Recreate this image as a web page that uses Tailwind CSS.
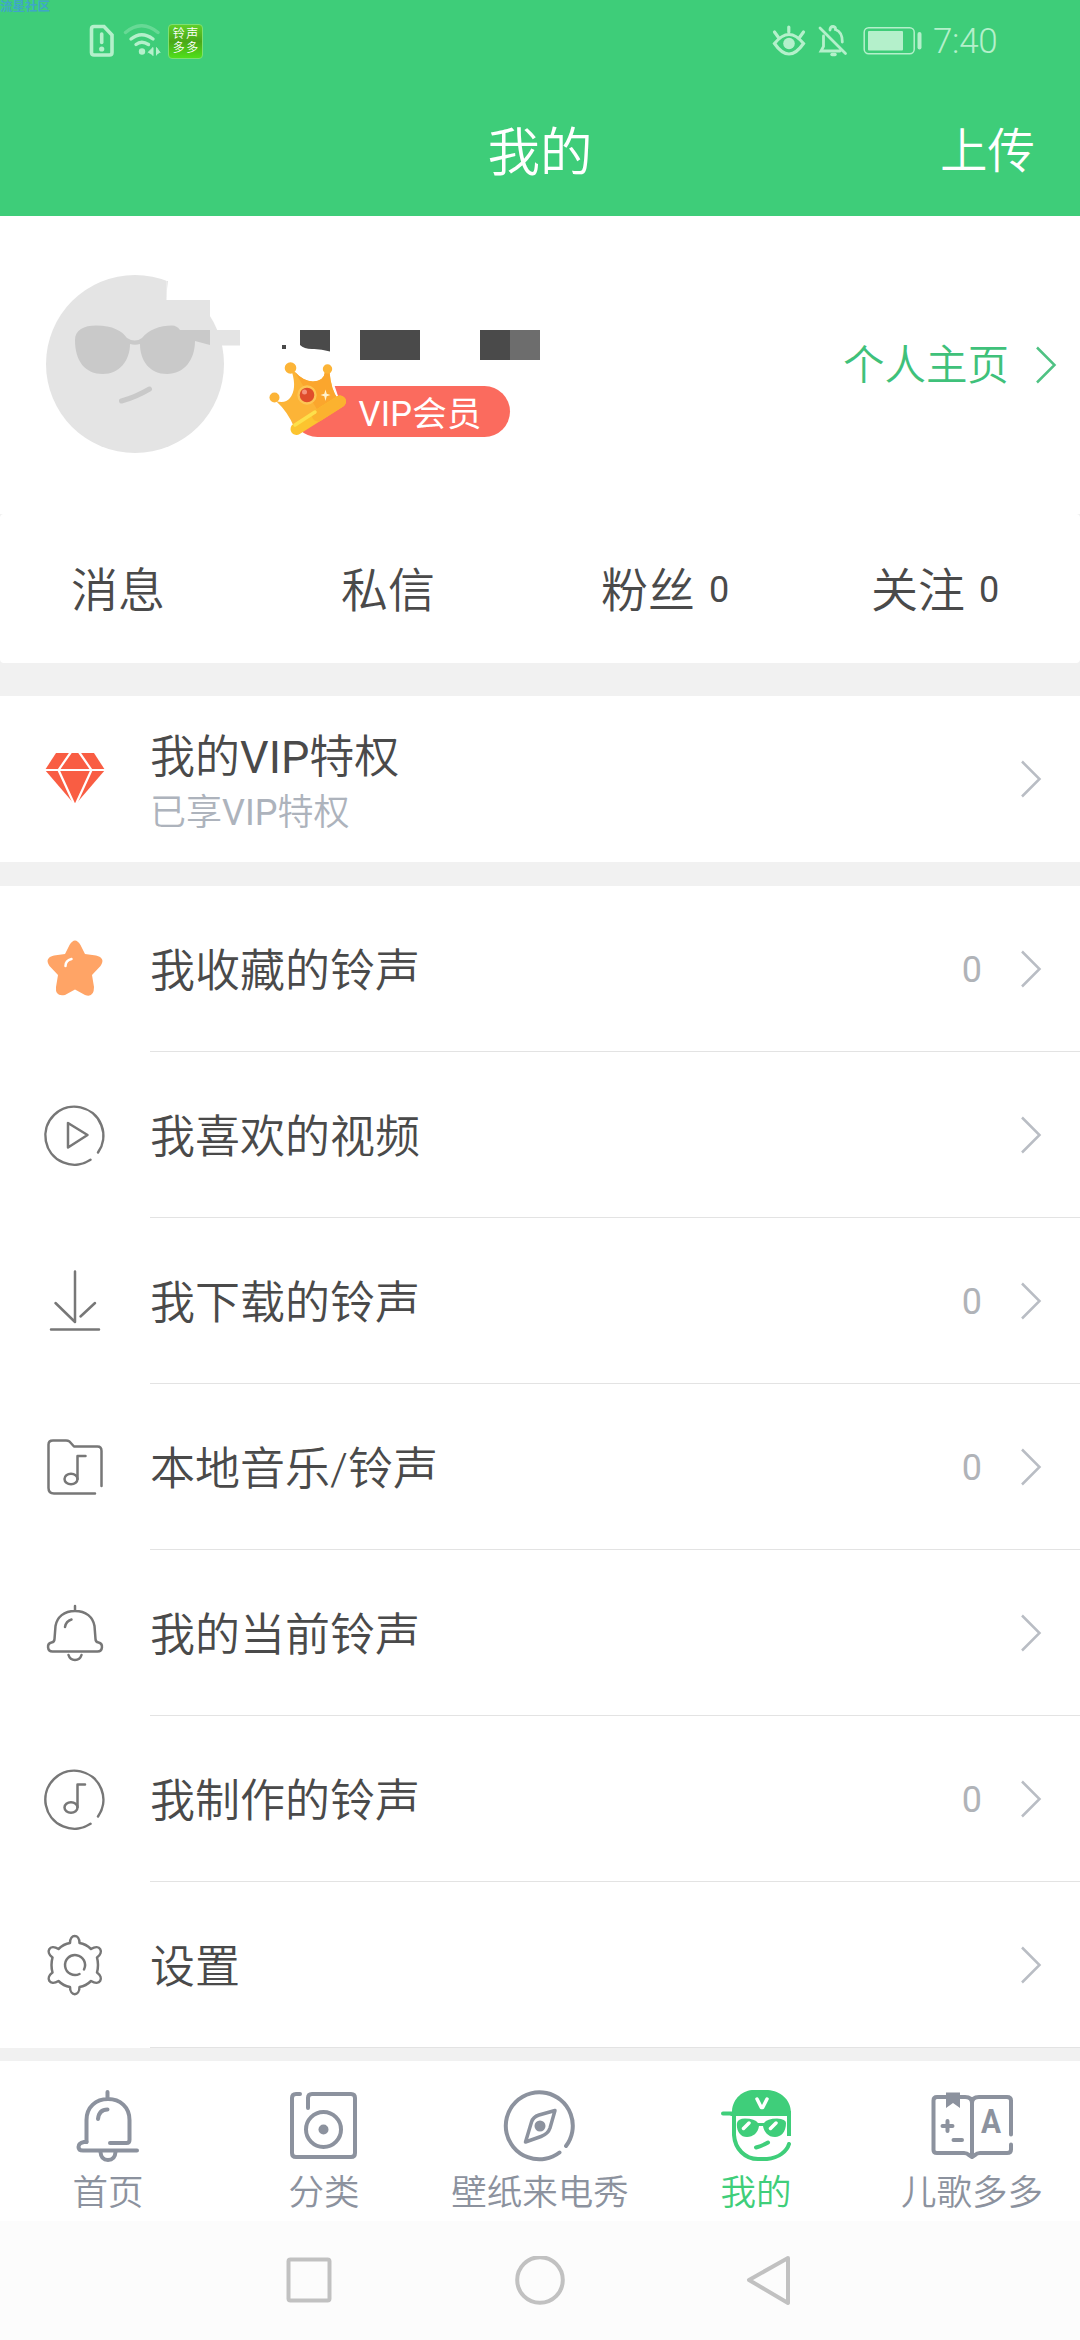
<!DOCTYPE html>
<html lang="zh-CN">
<head>
<meta charset="utf-8">
<title>我的</title>
<script src="https://cdn.jsdelivr.net/npm/@tailwindcss/browser@4"></script>
</head>
<body class="bg-[#f1f1f1] font-['Roboto','Noto_Sans_CJK_SC',sans-serif] font-[350] text-[#4a4a4a]">
<div class="relative flex h-[2340px] w-[1080px] flex-col overflow-hidden">

  <!-- Header -->
  <header class="h-[216px] bg-[#3ecd79]">
    <span class="absolute left-0 top-0 h-[18px] whitespace-nowrap text-[12.5px] leading-[14px] font-bold text-[#3fa6c8]">流星社区</span>
    <div class="flex h-[82px] items-center justify-between pl-[88px] pr-[82px] text-[#b4f0cb]">
      <div class="flex items-center">
        <svg class="h-[34px] w-[28px]" viewBox="0 0 28 34" fill="none" stroke="currentColor" stroke-width="3.6"><path d="M6 2.5H16L24 11V28.500Q24 31 21.500 31H6Q3.500 31 3.500 28.500V5Q3.500 2.500 6 2.500Z"/><path d="M13.700 10V18.500" stroke-linecap="round"/><circle cx="13.700" cy="25" r="2.600" fill="currentColor" stroke="none"/></svg>
        <svg class="ml-[7px] h-[34px] w-[38px]" viewBox="0 0 38 34" fill="none" stroke="currentColor" stroke-width="3.400" stroke-linecap="round"><path d="M2.500 8.500Q18.500 -5 35 8.500" opacity=".35"/><path d="M8 15Q18.500 6.500 30 15"/><path d="M13 20.500Q18.500 16 25.500 20.500" /><circle cx="19" cy="27.500" r="3.200" fill="currentColor" stroke="none"/><path d="M25 28.500L30 23.500V31.500M33.500 31V23.500L37 28.500" fill="currentColor" stroke-width="1"/></svg>
        <div class="ml-[7px] grid h-[35px] w-[35px] grid-cols-2 place-items-center rounded-[4px] border border-[#7fe070] bg-linear-to-b from-[#5fd02a] via-[#4aa818] to-[#4fe01a] px-[3px] py-[3px] text-[12px] leading-[12px] text-white"><span>铃</span><span>声</span><span>多</span><span>多</span></div>
      </div>
      <div class="flex items-center">
        <svg class="h-[34px] w-[34px]" viewBox="0 0 34 34" fill="none" stroke="currentColor" stroke-width="3.200" stroke-linecap="round"><path d="M2.500 19.500Q17 1.500 31.500 19.500Q17 40.500 2.500 19.500Z"/><path d="M16.800 3V8M2.500 8L6.500 13.500M31.500 8L27.500 13.500"/><circle cx="17" cy="19.500" r="5.800" fill="currentColor" stroke="none"/></svg>
        <svg class="ml-[12px] h-[34px] w-[30px]" viewBox="0 0 30 34" fill="none" stroke="currentColor" stroke-width="2.800" stroke-linecap="round"><path d="M2 4L27.500 29.500M5.500 12V22.500L3 27H22"/><path d="M12 6Q12 2.500 15 2.500Q18 3 17.500 5.500Q24.500 8 24.300 18"/><path d="M14 30.500H17" stroke-width="3.500"/></svg>
        <svg class="ml-[14px] h-[34px] w-[62px]" viewBox="0 0 62 34" fill="none"><rect x="2.200" y="3.700" width="50" height="26" rx="4.500" stroke="currentColor" stroke-width="1.500"/><rect x="6" y="7" width="35" height="19.500" rx="1" fill="currentColor"/><rect x="55.500" y="8" width="4" height="17.500" rx="2" fill="currentColor"/></svg>
        <span class="ml-[9px] block w-[65px] whitespace-nowrap text-[35px] leading-none tracking-[-0.3px]">7:40</span>
      </div>
    </div>
    <div class="grid h-[134px] grid-cols-3 items-start text-white">
      <h1 class="col-start-2 mt-[43px] text-center text-[52.500px] leading-[56px] font-[350]">我的</h1>
      <a class="mt-[43px] pr-[45px] text-right text-[47.500px] leading-[54px]">上传</a>
    </div>
  </header>

  <!-- Profile -->
  <section class="relative flex h-[298px] bg-white">
    <svg class="h-[298px] w-[560px] shrink-0" viewBox="0 216 560 298">
      <circle cx="135" cy="364" r="89" fill="#e4e4e4"/>
      <path d="M166.500 260H240V345L224 346Q217 318 210 300H166.500Z" fill="#fff"/>
      <path d="M168 281Q166.500 290 166.500 300H210V345H222V352H166.500V281Z" fill="#e4e4e4"/>
      <rect x="210" y="330" width="30" height="15.500" fill="#e4e4e4"/>
      <path d="M75 340C75 330 84 325.500 96 325.500C113 325.500 122 331 127 338Q135 343 142 338C148 330 160 325.500 172 325.500Q177 325.500 180 330H210V345L195 341C195 360 184 374 167 374C150 374 140 361 140 344Q135 345.500 130 344C130 361 119 374 103 374C85 374 75 361 75 340Z" fill="#c9c9c9"/>
      <path d="M121.500 401Q136 397 149.500 389" fill="none" stroke="#c9c9c9" stroke-width="5" stroke-linecap="round"/>
      <g fill="#4a4a4a"><rect x="282" y="345" width="4" height="4"/><path d="M300 330H330V351.500Q320 348.500 312 349Q304 349 300 345Z"/><rect x="360" y="330" width="60" height="30"/><rect x="480" y="330" width="30" height="30"/></g>
      <rect x="510" y="330" width="30" height="30" fill="#6d6d6d"/>
      <rect x="292" y="386" width="218" height="51" rx="25.500" fill="#fb6b5e"/>
      <path d="M286 384H334L338 396L296 422L286 412Z" fill="#fff"/>
      <path d="M276 401Q285 404 290 398Q297 389 292 372L295 372Q303 381 313 381.500Q324 381 325 372L329.500 372Q331 390 338 399L294 427Q288 412 276 401Z" fill="#fcb437"/>
      <path d="M295 372Q303 381 313 381.500Q324 381 325 372L329.500 372Q331 390 338 399L318 411Z" fill="#fba62d"/>
      <g fill="#fcb437"><circle cx="290.500" cy="368" r="5.800"/><circle cx="327.500" cy="369" r="4.700"/><circle cx="274.500" cy="397.500" r="5"/></g>
      <path d="M296.500 429L340 401.500" stroke="#fcc42f" stroke-width="12" stroke-linecap="round"/>
      <path d="M318 415.500L340 401.500" stroke="#fbb22f" stroke-width="12" stroke-linecap="round"/>
      <path d="M295 425L315 412" stroke="#fde04b" stroke-width="3.500" stroke-linecap="round"/>
      <circle cx="307" cy="395" r="8.500" fill="#e04d2b" stroke="#fdc554" stroke-width="2.400"/><circle cx="304.500" cy="392" r="2.500" fill="#f5927b"/>
      <path d="M325.500 389.500L326.700 393.800L330.500 395L326.700 396.200L325.500 401L324.300 396.200L320.500 395L324.300 393.800Z" fill="#fff3cf"/>
      <text x="358.500" y="425.500" font-size="34.500" fill="#fff" font-weight="400" textLength="123">VIP会员</text>
    </svg>
    <a class="ml-auto flex h-[298px] items-center pr-[23px] text-[41.500px] leading-none text-[#3fc17a]"><span class="pt-[2px]">个人主页</span>
      <svg class="ml-[26px] h-[40px] w-[22px]" viewBox="0 0 22 40" fill="none" stroke="#4fc283" stroke-width="2.500"><path d="M2 2.500L19.500 20L2 37.500"/></svg></a>
  </section>

  <!-- Counters -->
  <section class="grid h-[149px] grid-cols-4 items-center rounded-[4px] bg-white pt-[3px] text-[47px] leading-none">
    <a class="pl-[71px]">消息</a><a class="pl-[71px]">私信</a>
    <a class="flex items-center gap-[14px] pl-[61px]">粉丝<span class="text-[36px] font-normal">0</span></a>
    <a class="flex items-center gap-[14px] pl-[61px]">关注<span class="text-[36px] font-normal">0</span></a>
  </section>

  <!-- VIP -->
  <section class="mt-[33px] flex h-[166px] items-center bg-white pr-[38px]">
    <svg class="mx-[40px] h-[70px] w-[70px]" viewBox="0 0 70 70"><path d="M16 9H54L65 26L35 61L5 26Z" fill="#f95d43"/><path d="M4 26H66M31 8L18.500 26L35 62L51.500 26L39 8" stroke="#fff" stroke-width="2.200" fill="none"/></svg>
    <div class="flex-1 pt-[12px]"><p class="text-[45px] leading-[56px]">我的<span class="font-normal">VIP</span>特权</p><p class="text-[36px] leading-[54px] text-[#adb3bc]">已享<span class="font-normal">VIP</span>特权</p></div>
    <svg class="h-[40px] w-[22px]" viewBox="0 0 22 40" fill="none" stroke="#b9bdc4" stroke-width="2.500"><path d="M2 2.500L19.500 20L2 37.500"/></svg>
  </section>

  <!-- Menu -->
  <ul id="menu" class="mt-[24px] bg-white"></ul>

  <!-- Tabs -->
  <nav class="mt-[13px] grid h-[160px] grid-cols-5 bg-white pt-[25px] text-center text-[35.500px] leading-[54px] text-[#8c929e]">
    <a><svg class="mx-auto h-[80px] w-[80px]" viewBox="0 0 80 80" fill="none" stroke="currentColor" stroke-width="4" stroke-linecap="round" stroke-linejoin="round"><path d="M39.500 6V13M18.500 56V34C18.500 21 28 13 40 13C52 13 61.500 21 61.500 34V54Q61.500 57 58.500 57H42"/><path d="M30 33Q31 23.500 39.500 23.500M18.500 56H16Q10.500 57 10.500 61Q10.500 64.500 15 64.500H69"/><path d="M32.500 66Q33 74 40 74Q47 74 47.500 66"/></svg>首页</a>
    <a><svg class="mx-auto h-[80px] w-[80px]" viewBox="0 0 80 80" fill="none" stroke="currentColor" stroke-width="4" stroke-linecap="round" stroke-linejoin="round"><path d="M16 8H12Q8 8 8 12V67Q8 71 12 71H67Q71 71 71 67V12Q71 8 67 8H28Q24 8 24 12V22"/><circle cx="39.500" cy="43.500" r="17.500"/><circle cx="39.500" cy="43.500" r="5" fill="currentColor" stroke="none"/></svg>分类</a>
    <a><svg class="mx-auto h-[80px] w-[80px]" viewBox="0 0 80 80" fill="none" stroke="currentColor" stroke-width="4" stroke-linecap="round" stroke-linejoin="round"><path d="M59.500 66.500A33.500 33.500 0 1 1 66 60"/><path d="M55 24.500L39 29Q33 31 31.500 36L25.500 56L41 50.500Q48 48 50 42Z" stroke-width="3.500"/><circle cx="40" cy="40" r="5.500" fill="currentColor" stroke="none"/></svg>壁纸来电秀</a>
    <a class="text-[#3fce7a]"><svg class="mx-auto h-[80px] w-[80px]" viewBox="0 0 80 80" fill="none" stroke="currentColor" stroke-width="4" stroke-linecap="round" stroke-linejoin="round"><path d="M16 28V25C17 12 27 4 38 4H52C64 5 75 13 75 27V30H14Z" fill="currentColor" stroke="none"/><path d="M7 27.500H16M18 28V49C19 63 29 73 42 73H51C63 72 71 65 73 58"/><path d="M73 25V50" stroke-linecap="butt"/><path d="M40 61.500Q47 59.500 52 56.500"/><path d="M21 37Q22 32.500 29 32.500Q39 32.500 42 37H48Q51 32.500 61 32.500Q70 33 70 37C70 46 65 51 59 51C52 51 48 46 47 40H43C42 47 37 51 31 51C24 51 20 44 21 37Z" fill="currentColor" stroke="none"/><path d="M27.500 42.500L33 37M54.500 42.500L60 37" stroke="#fff" stroke-width="3.500"/><path d="M41 13L45.300 21.500H46.700L51 13" stroke="#fff" stroke-width="3.500"/></svg>我的</a>
    <a><svg class="mx-auto h-[80px] w-[84px]" viewBox="0 0 84 80" fill="none" stroke="currentColor" stroke-width="4" stroke-linecap="round" stroke-linejoin="round"><path d="M18 11H7Q3.500 11 3.500 14.500V64Q3.500 67 7 67H34Q37 67 39 69L42 71L45 69Q47 67 50 67H77Q81 67 81 63.500V58.500M81 48.500V14.500Q81 11 77 11H49Q42 11 42 17Q42 11 35 11H30M42 16V70M12.500 40H22.500M17.500 35V45M23.500 54H32"/><path d="M16 6.500H30V22L23 17L16 22Z" fill="currentColor" stroke="none"/><text x="51" y="46.500" font-size="33" font-weight="700" fill="currentColor" stroke="none" textLength="20" lengthAdjust="spacingAndGlyphs">A</text></svg>儿歌多多</a>
  </nav>

  <!-- System navigation -->
  <footer class="flex h-[119px] items-center bg-[#fcfcfc] pl-[283px] pt-[2px] text-[#c1c1c1]">
    <svg class="h-[52px] w-[52px]" viewBox="0 0 52 52" fill="none" stroke="currentColor" stroke-width="4"><rect x="5.500" y="3.500" width="41" height="41" rx="2"/></svg>
    <svg class="ml-[179px] h-[52px] w-[52px]" viewBox="0 0 52 52" fill="none" stroke="currentColor" stroke-width="4"><circle cx="26" cy="24" r="22.800"/></svg>
    <svg class="ml-[179px] h-[52px] w-[52px]" viewBox="0 0 52 52" fill="none" stroke="currentColor" stroke-width="4" stroke-linejoin="round"><path d="M43 2L4 24L43 47Z"/></svg>
  </footer>
</div>

<template id="row">
  <li class="flex h-[166px]">
    <span class="flex w-[150px] items-center justify-center" data-icon></span>
    <div class="flex flex-1 items-center border-b border-[#e3e3e3] pr-[38px]">
      <span class="flex-1 pt-[5px] text-[45px] leading-none" data-label></span>
      <span class="mr-[38px] pt-[3px] text-[36px] leading-none font-normal text-[#b0b3b8]" data-count></span>
      <svg class="h-[40px] w-[22px]" viewBox="0 0 22 40" fill="none" stroke="#b9bdc4" stroke-width="2.500"><path d="M2 2.500L19.500 20L2 37.500"/></svg>
    </div>
  </li>
</template>
<script>
const line = p => '<svg class="h-[70px] w-[70px]" viewBox="0 0 70 70" fill="none" stroke="#777" stroke-width="2.500" stroke-linecap="round" stroke-linejoin="round">' + p + '</svg>';
const ring = '<path d="M50.500 59.800A29 29 0 1 1 58 52.500"/>';
const note = '<path d="M45 20.500H37.500V43"/><ellipse cx="31" cy="43.500" rx="6.500" ry="5.200"/>';
const rows = [
  ['<svg class="h-[70px] w-[70px]" viewBox="0 0 70 70"><path d="M29.500 11Q35 2 40.500 11L45 20L56 21.500Q66 24 60.500 32L52 41L54 53Q54 64 45 61L35 55.500L25 61Q15 63 16 53L18 41L9.500 32Q4 24 14 21.500L25 20Z" fill="#ffa466"/><path d="M25.500 32Q25.500 26.500 31.500 25" fill="none" stroke="#fff" stroke-width="2.500" stroke-linecap="round"/></svg>', '我收藏的铃声', '0'],
  [line(ring + '<path d="M28 23V47.500L47.500 35Z"/>'), '我喜欢的视频', ''],
  [line('<path d="M35 5.500V56L15.500 37M40.500 50.500L55 37M11 63.500H59"/>'), '我下载的铃声', '0'],
  [line('<path d="M61.500 54V19Q61.500 14.500 57.500 14.500H34L29.500 9.500Q28 8.500 26 8.500H13Q8.500 8.500 8.500 12.500V56Q8.500 61.500 14 61.500H55"/><path d="M45.500 24H37.500V47"/><ellipse cx="31" cy="47" rx="6.500" ry="5.200"/>'), '本地音乐/铃声', '0'],
  [line('<path d="M35 8V13M35 13C24 13 17 19 15.500 28L14.500 41Q14.500 44 11.500 44.500C6.500 45.500 7 53.500 12.500 53.500H57.500C63 53.500 63.500 45.500 58.500 44.500Q55.500 44 55.500 41L54.500 28C53 19 46 13 35 13ZM25 29Q26 23 31.500 21.500M28.500 57Q30 62 35 62Q40 62 41.500 57"/>'), '我的当前铃声', ''],
  [line(ring + note), '我制作的铃声', '0'],
  [line('<path d="M30 13C30 3.500 39.500 3.500 39.500 13Q46 14 51 19C60 13.500 64.500 22 57 27.500Q59 35 57 42.500C64.500 48 60 56.500 51 51Q46 56 39.500 57C39.500 66.500 30 66.500 30 57Q23.500 56 18.500 51C9.500 56.500 5 48 12.500 42.500Q10.500 35 12.500 27.500C5 22 9.500 13.500 18.500 19Q23.500 14 30 13Z"/><path d="M39.500 44A10 10 0 1 1 44 39.500"/>'), '设置', '']
];
const list = document.getElementById('menu'), tpl = document.getElementById('row');
rows.forEach(([icon, label, count]) => {
  const n = tpl.content.cloneNode(true);
  n.querySelector('[data-icon]').innerHTML = icon;
  n.querySelector('[data-label]').textContent = label;
  n.querySelector('[data-count]').textContent = count;
  list.appendChild(n);
});
</script>
</body>
</html>
